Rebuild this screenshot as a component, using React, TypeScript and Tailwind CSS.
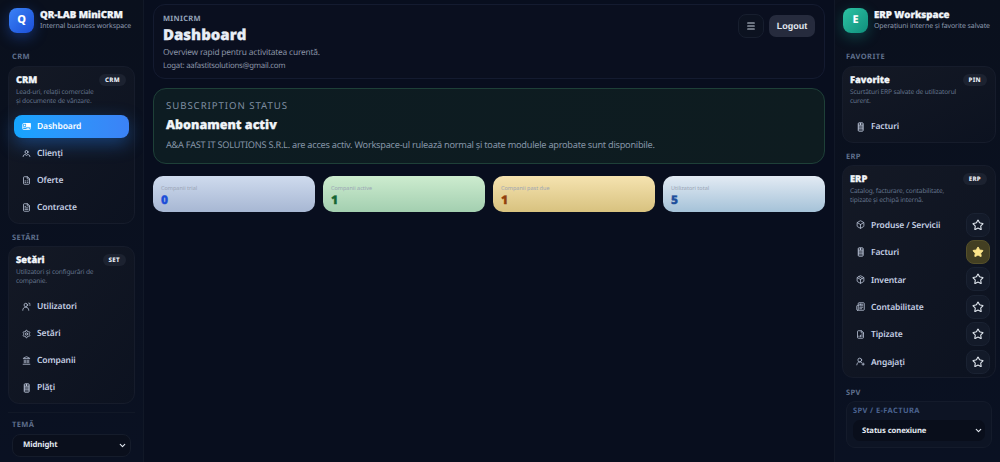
import { ChevronDown, Star, Menu, Settings, Box, Package, FileText, FileSpreadsheet, Landmark, Newspaper, FileBarChart, UserRoundPlus } from "lucide-react"
import type { ReactNode } from "react"

const font = "font-['Noto_Sans','Open_Sans',sans-serif] [text-rendering:geometricPrecision]"
const heavy = "font-['Open_Sans',sans-serif] font-extrabold [-webkit-text-stroke:0.3px_currentColor]"

function DashIcon() {
  return (
    <svg width="11" height="11" viewBox="0 0 24 24" fill="none" stroke="currentColor" strokeWidth="2.2">
      <rect x="2" y="4" width="20" height="16" rx="2" />
      <rect x="12" y="4" width="10" height="9" fill="currentColor" />
      <rect x="5" y="7" width="4" height="4" fill="currentColor" stroke="none" />
      <path d="M2 14h9M12 17h7" />
    </svg>
  )
}

function ClientsIcon() {
  return (
    <svg width="11" height="11" viewBox="0 0 24 24" fill="none" stroke="currentColor" strokeWidth="2.2" strokeLinecap="round">
      <circle cx="12" cy="8" r="4" />
      <path d="M3 20c0-3 2-5 5-5 2 0 3 1 4 2 1-1 2-2 4-2 3 0 5 2 5 5" />
    </svg>
  )
}

function UsersIcon() {
  return (
    <svg width="11" height="11" viewBox="0 0 24 24" fill="none" stroke="currentColor" strokeWidth="2" strokeLinecap="round">
      <circle cx="10" cy="8" r="4.5" />
      <path d="M2 22c0-5 3-8 8-8s8 3 8 8M18 3l3 1M19 8h3" />
    </svg>
  )
}

function InvoiceIcon() {
  return (
    <svg width="11" height="12" viewBox="0 0 24 24" fill="none" stroke="currentColor" strokeWidth="2.4">
      <rect x="6" y="1" width="13" height="22" rx="2" />
      <path d="M6 7h13M6 12h13M6 17h13M12 1v6" />
    </svg>
  )
}

function Brand({ letter, title, subtitle, logo }: { letter: string; title: string; subtitle: string; logo: string }) {
  return (
    <div className="flex items-center gap-[6px] h-[26px]">
      <div className={`w-[25px] h-[25px] shrink-0 rounded-[8px] flex items-center justify-center text-white text-[11px] font-extrabold ${logo}`}>
        {letter}
      </div>
      <div className="min-w-0">
        <div className={`text-[9.7px] leading-[13px] tracking-[-0.05px] ${heavy} text-[#f1f5f9] whitespace-nowrap`}>{title}</div>
        <div className="text-[7px] leading-[11px] tracking-[-0.1px] text-[#8f9bb0] whitespace-nowrap">{subtitle}</div>
      </div>
    </div>
  )
}

function SectionLabel({ children }: { children: ReactNode }) {
  return <div className="text-[7.5px] leading-[10px] font-bold tracking-[0.05em] text-[#5f6f8c]">{children}</div>
}

function Pill({ children }: { children: ReactNode }) {
  return (
    <span className="h-[12px] px-[6px] rounded-full bg-[#1c2230] text-[6.2px] leading-[12px] font-extrabold tracking-[0.05em] text-[#e8edf5]">
      {children}
    </span>
  )
}

function NavItem({ icon, label, active }: { icon: ReactNode; label: string; active?: boolean }) {
  return (
    <div
      className={`h-[23px] rounded-[8px] flex items-center gap-[6px] pl-[8px] text-[8.5px] tracking-[-0.1px] font-semibold ${
        active
          ? "bg-gradient-to-r from-[#14a5ff] to-[#3b82f6] text-white shadow-[0_6px_18px_rgba(37,130,246,0.4)]"
          : "text-[#c6d0e4]"
      }`}
    >
      <span className="w-[9px] flex justify-center">{icon}</span>
      <span className="pt-[2px]">{label}</span>
    </div>
  )
}

function Panel({ title, pill, text, children }: { title: string; pill: string; text: ReactNode; children: ReactNode }) {
  return (
    <div className="rounded-[11px] border border-[#161c2b] bg-gradient-to-br from-[#141925] to-[#0c1220] px-[5px] pt-[7px] pb-[4px]">
      <div className="flex justify-between items-start pl-[2px] pr-[3px] h-[11px]">
        <div className={`text-[9.3px] leading-[11px] ${heavy} text-[#f1f5f9]`}>{title}</div>
        <Pill>{pill}</Pill>
      </div>
      <div className="pl-[2px] mt-[2px] text-[6.6px] leading-[9px] tracking-[-0.15px] text-[#64748b]">{text}</div>
      {children}
    </div>
  )
}

function StatCard({ label, value, bg, color }: { label: string; value: string; bg: string; color: string }) {
  return (
    <div className={`flex-1 h-[36px] rounded-[10px] pl-[8px] pt-[8px] ${bg}`}>
      <div className="text-[5.5px] leading-[8px] text-[#9aa4b4]">{label}</div>
      <div className={`text-[12px] leading-[15px] ${heavy} ${color}`}>{value}</div>
    </div>
  )
}

function ErpRow({ icon, label, starred }: { icon: ReactNode; label: string; starred?: boolean }) {
  return (
    <div className="h-[27.4px] flex items-center justify-between pl-[8px]">
      <div className="flex items-center gap-[6px] text-[8.5px] tracking-[-0.1px] font-semibold text-[#c6d0e4]">
        <span className="w-[9px] flex justify-center">{icon}</span>
        <span className="pt-[3px]">{label}</span>
      </div>
      {starred ? (
        <div className="w-[24px] h-[24px] rounded-[8px] bg-[#433f22] border border-[#55502a] flex items-center justify-center">
          <Star size={12} className="text-[#fde68a] fill-[#fde68a]" />
        </div>
      ) : (
        <div className="w-[24px] h-[24px] rounded-[8px] bg-[#131a29] border border-[#1a2232] flex items-center justify-center">
          <Star size={12} strokeWidth={2.2} className="text-[#e2e8f0]" />
        </div>
      )}
    </div>
  )
}

export default function App() {
  return (
    <div className={`h-[462px] w-[1000px] overflow-hidden flex bg-[#080e1e] ${font}`}>
      {/* Left sidebar */}
      <aside className="w-[144px] shrink-0 h-full border-r border-[#111827] bg-gradient-to-b from-[#0a101d] to-[#0a1122] px-[8px] pt-[7px] overflow-hidden">
        <div className="pl-[1px]">
          <Brand
            letter="Q"
            title="QR-LAB MiniCRM"
            subtitle="Internal business workspace"
            logo="bg-gradient-to-br from-[#3b82f6] to-[#1d4ed8] shadow-[0_4px_14px_rgba(37,99,235,0.4)]"
          />
        </div>
        <div className="mt-[19px] pl-[4px]">
          <SectionLabel>CRM</SectionLabel>
        </div>
        <div className="mt-[4px]">
          <Panel title="CRM" pill="CRM" text={<>Lead-uri, relații comerciale<br />și documente de vânzare.</>}>
            <div className="mt-[10px] flex flex-col gap-[4px]">
              <NavItem active icon={<DashIcon />} label="Dashboard" />
              <NavItem icon={<ClientsIcon />} label="Clienți" />
              <NavItem icon={<FileSpreadsheet size={11} />} label="Oferte" />
              <NavItem icon={<FileText size={11} />} label="Contracte" />
            </div>
          </Panel>
        </div>
        <div className="mt-[9px] pl-[4px]">
          <SectionLabel>SETĂRI</SectionLabel>
        </div>
        <div className="mt-[3px]">
          <Panel title="Setări" pill="SET" text={<>Utilizatori și configurări de<br />companie.</>}>
            <div className="mt-[10px] flex flex-col gap-[4px]">
              <NavItem icon={<UsersIcon />} label="Utilizatori" />
              <NavItem icon={<Settings size={12} />} label="Setări" />
              <NavItem icon={<Landmark size={11} />} label="Companii" />
              <NavItem icon={<InvoiceIcon />} label="Plăți" />
            </div>
          </Panel>
        </div>
        <div className="mt-[8px] border-t border-[#111827] pt-[7px] pl-[4px]">
          <SectionLabel>TEMĂ</SectionLabel>
        </div>
        <div className="mt-[4px] mx-[4px] h-[23px] rounded-[8px] border border-[#151c2b] bg-[#0a0f1c] flex items-center justify-between pl-[10px] pr-[3px] text-[7.8px] tracking-[-0.1px] font-bold text-[#e2e8f0]">
          Midnight
          <ChevronDown size={9} strokeWidth={3} />
        </div>
      </aside>

      {/* Main */}
      <main className="flex-1 min-w-0 px-[9px] pt-[4px]">
        <div className="h-[75px] rounded-[12px] border border-[#141b30] bg-[#0a0f1f] flex justify-between pl-[9px] pr-[9px] pt-[9px]">
          <div>
            <div className="text-[7.5px] leading-[10px] font-bold tracking-[0.04em] text-[#94a3b8]">MINICRM</div>
            <div className={`text-[15px] leading-[20px] mt-[1px] ${heavy} text-[#e8edf6]`}>Dashboard</div>
            <div className="text-[8.4px] leading-[13px] mt-[1px] tracking-[-0.2px] text-[#8a94a6]">Overview rapid pentru activitatea curentă.</div>
            <div className="text-[7.8px] leading-[13px] mt-[1px] tracking-[-0.25px] text-[#8a94a6]">Logat: aafastitsolutions@gmail.com</div>
          </div>
          <div className="flex items-start gap-[5px]">
            <div className="w-[26px] h-[24px] rounded-[8px] border border-[#171e2e] bg-[#0c1220] flex items-center justify-center">
              <Menu size={10} strokeWidth={2.5} className="text-[#cbd5e1]" />
            </div>
            <div className="w-[46px] h-[22px] text-center mt-[1px] rounded-[7px] bg-[#262b3d] text-[9px] leading-[22px] font-bold text-[#e2e8f0] font-['Liberation_Sans',sans-serif]">
              Logout
            </div>
          </div>
        </div>

        <div className="mt-[9px] h-[76px] rounded-[13px] border border-[#1e4038] bg-gradient-to-r from-[#0d1c22] to-[#0e1c20] pl-[12px] pt-[11px]">
          <div className="text-[9.6px] leading-[12px] tracking-[0.1em] text-[#7f8ea1]">SUBSCRIPTION STATUS</div>
          <div className={`text-[12.5px] leading-[18px] mt-[4px] ${heavy} text-[#f1f5f9]`}>Abonament activ</div>
          <div className="text-[9.2px] leading-[14px] mt-[4px] tracking-[-0.25px] text-[#8696a8]">
            A&amp;A FAST IT SOLUTIONS S.R.L. are acces activ. Workspace-ul rulează normal și toate modulele aprobate sunt disponibile.
          </div>
        </div>

        <div className="mt-[12px] flex gap-[8px]">
          <StatCard label="Companii trial" value="0" bg="bg-gradient-to-b from-[#cfdbee] to-[#a7b7d3]" color="text-[#1d4ed8]" />
          <StatCard label="Companii active" value="1" bg="bg-gradient-to-b from-[#cdeccf] to-[#a3cfb0]" color="text-[#166534]" />
          <StatCard label="Companii past due" value="1" bg="bg-gradient-to-b from-[#f5e3b0] to-[#d8c27f]" color="text-[#92400e]" />
          <StatCard label="Utilizatori total" value="5" bg="bg-gradient-to-b from-[#e3ebf4] to-[#a5c2d8]" color="text-[#1e4f9c]" />
        </div>
      </main>

      {/* Right sidebar */}
      <aside className="w-[166px] shrink-0 h-full border-l border-[#111827] bg-gradient-to-b from-[#0a101d] to-[#0a1122] pl-[7px] pr-[4px] pt-[7px] overflow-hidden">
        <div className="pl-[1px]">
          <Brand
            letter="E"
            title="ERP Workspace"
            subtitle="Operațiuni interne și favorite salvate"
            logo="bg-gradient-to-br from-[#2cc4a4] to-[#0f8f7c] shadow-[0_4px_14px_rgba(20,184,166,0.3)]"
          />
        </div>
        <div className="mt-[19px] pl-[4px]">
          <SectionLabel>FAVORITE</SectionLabel>
        </div>
        <div className="mt-[4px]">
          <Panel title="Favorite" pill="PIN" text={<>Scurtături ERP salvate de utilizatorul<br />curent.</>}>
            <div className="mt-[10px]">
              <NavItem icon={<InvoiceIcon />} label="Facturi" />
            </div>
          </Panel>
        </div>
        <div className="mt-[9px] pl-[4px]">
          <SectionLabel>ERP</SectionLabel>
        </div>
        <div className="mt-[3px]">
          <Panel title="ERP" pill="ERP" text={<>Catalog, facturare, contabilitate,<br />tipizate și echipă internă.</>}>
            <div className="mt-[7px] -mb-[2px]">
              <ErpRow icon={<Box size={11} />} label="Produse / Servicii" />
              <ErpRow starred icon={<InvoiceIcon />} label="Facturi" />
              <ErpRow icon={<Package size={11} />} label="Inventar" />
              <ErpRow icon={<Newspaper size={11} />} label="Contabilitate" />
              <ErpRow icon={<FileBarChart size={11} />} label="Tipizate" />
              <ErpRow icon={<UserRoundPlus size={11} />} label="Angajați" />
            </div>
          </Panel>
        </div>
        <div className="mt-[10px] pl-[4px]">
          <SectionLabel>SPV</SectionLabel>
        </div>
        <div className="mt-[3px] mx-[4px] rounded-[9px] border border-[#141b2b] bg-[#0d1424] px-[6px] pt-[4px] pb-[6px]">
          <div className="text-[7.5px] leading-[10px] font-bold tracking-[0.05em] text-[#4b6390]">SPV / E-FACTURA</div>
          <div className="mt-[4px] h-[21px] rounded-[7px] bg-[#090e1b] flex items-center justify-between pl-[9px] pr-[2px] text-[7.7px] tracking-[-0.1px] font-bold text-[#e2e8f0]">
            <span className="pt-[2px]">Status conexiune</span>
            <ChevronDown size={9} strokeWidth={3} />
          </div>
        </div>
      </aside>
    </div>
  )
}
